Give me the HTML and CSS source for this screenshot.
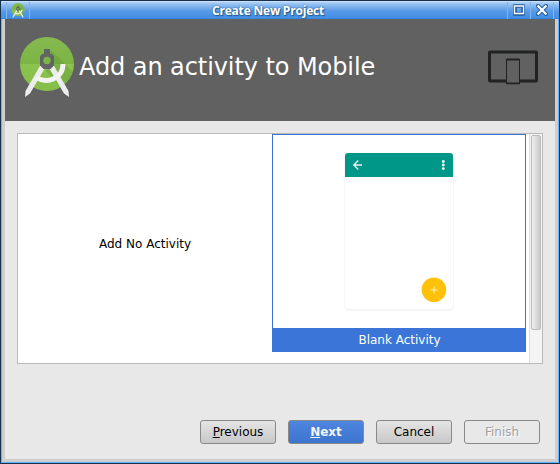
FILE: index.html
```html
<!DOCTYPE html>
<html lang="en">
<head>
<meta charset="utf-8">
<title>Create New Project</title>
<link rel="stylesheet" href="styles.css">
</head>
<body>
<svg width="0" height="0" class="defs">
  <defs>
    <linearGradient id="green" x1="0" y1="0" x2="0" y2="1">
      <stop offset="0" stop-color="#86b950"/><stop offset=".5" stop-color="#7cb544"/>
      <stop offset=".5" stop-color="#8bc34f"/><stop offset="1" stop-color="#85be49"/>
    </linearGradient>
    <clipPath id="disc"><circle cx="27" cy="27" r="27"/></clipPath>
    <symbol id="studio" viewBox="0 0 54 61">
      <circle cx="27" cy="27" r="27" fill="url(#green)"/>
      <g clip-path="url(#disc)">
        <path d="M31 13 54 36V54H44L26 34z" fill="#4f8a2c" opacity=".28"/>
      </g>
      <path d="M20.500 28 5.500 54 5 60 10 56.500 25 31zM33.500 28 48.500 54 49 60 44 56.500 29 31z" fill="#ececec"/>
      <path d="M16.500 40.500C27 47.500 43 41.500 43 27" fill="none" stroke="#f3f3f3" stroke-width="5"/>
      <path d="M24 12h6v4.500l2.500 1 1.500 2v9l-3.500 3.500h-7l-3.500-3.500v-9l1.500-2 2.500-1z" fill="#616463"/>
      <circle cx="27" cy="23.500" r="3.700" fill="#7cb544"/>
    </symbol>
  </defs>
</svg>
<div class="window">
  <div class="titlebar">
    <span class="menu"><svg class="mini" width="14" height="15"><use href="#studio"/></svg></span>
    <span class="caption">Create New Project</span>
    <span class="ctl max"><svg width="12" height="12" viewBox="0 0 12 12"><rect x="2" y="2" width="8" height="8" fill="none" stroke="#245a9d" stroke-width="3.500"/><path d="M1.500 2H10.500V9.500H1.500z" fill="none" stroke="#fff" stroke-width="1.300"/></svg></span>
    <span class="ctl close"><svg width="12" height="12" viewBox="0 0 12 12"><path d="M2 2 10 10M10 2 2 10" stroke="#245a9d" stroke-width="4" stroke-linecap="round"/><path d="M2.300 2.300 9.700 9.700M9.700 2.300 2.300 9.700" stroke="#fff" stroke-width="2.200" stroke-linecap="square"/></svg></span>
  </div>
  <div class="frame">
    <header class="banner">
      <svg class="logo" width="54" height="61"><use href="#studio"/></svg>
      <h1>Add an activity to Mobile</h1>
      <svg class="devices" width="50" height="35" viewBox="0 0 50 35">
        <rect x="1.500" y="2" width="47" height="29" rx=".5" fill="none" stroke="#202322" stroke-width="3"/>
        <rect x="18.500" y="9.500" width="13" height="24" fill="#616161" stroke="#202322"/>
        <path d="M18.500 9.500h13M18.500 33.300h13" stroke="#202322" stroke-width="1.800"/>
      </svg>
    </header>
    <main class="gallery">
      <div class="cell"><span>Add No Activity</span></div>
      <div class="cell selected">
        <div class="preview">
          <svg width="116" height="164" viewBox="0 0 116 164">
            <rect x="3" y="4" width="110" height="157" rx="4" fill="#fafafa"/>
            <rect x="3.500" y="4" width="109" height="156.500" rx="3.500" fill="#f3f3f3"/>
            <rect x="4" y="3" width="108" height="156" rx="3" fill="#fff"/>
            <path d="M4 27V6q0-3 3-3h102q3 0 3 3v21z" fill="#009788"/>
            <path d="M12.500 15H21M17.300 10.500 12.800 15l4.500 4.500" fill="none" stroke="#e3f4f2" stroke-width="1.400"/>
            <g fill="#f0faf9"><circle cx="102.300" cy="11.500" r="1.400"/><circle cx="102.300" cy="15" r="1.400"/><circle cx="102.300" cy="18.600" r="1.400"/></g>
            <circle cx="92.900" cy="139.800" r="12.300" fill="#ffc10a"/>
            <path d="M89.500 140h7M93 136.500v7" stroke="#fff0b8" stroke-width="1.100"/>
          </svg>
        </div>
        <div class="name">Blank Activity</div>
      </div>
      <div class="scroll"><div class="thumb"></div></div>
    </main>
    <footer class="actions">
      <button><span><u>P</u>revious</span></button>
      <button class="primary"><span><u>N</u>ext</span></button>
      <button><span>Cancel</span></button>
      <button class="off"><span>Finish</span></button>
    </footer>
  </div>
</div>
</body>
</html>
```
FILE: styles.css
```css
* { box-sizing: border-box; }
body {
  margin: 0;
  background: #17334f;
  font: 12px "DejaVu Sans", sans-serif;
  color: #000;
}
.defs { position: absolute; }
.window {
  display: flex;
  flex-direction: column;
  width: 560px;
  height: 464px;
  border: 1px solid #17314f;
  border-radius: 2px 2px 0 0;
  background: #63aef8;
  padding: 0 1px 1px;
  overflow: hidden;
}
.titlebar {
  display: flex;
  align-items: center;
  height: 18px;
  margin: 0 -1px;
  flex: none;
  background: linear-gradient(#d5e6fa 0, #a3c9f4 2px, #7db1ed 6px, #5799e6 10px, #4290e7 17px, #2f7fd2 18px);
}
.menu {
  width: 24px;
  height: 17px;
  margin-left: 5px;
  border: solid #82b5ee;
  border-width: 0 1px;
  display: flex;
  justify-content: center;
  align-items: center;
}
.caption {
  flex: 1;
  padding: 2px 1px 0 0;
  text-align: center;
  font: bold 12px/18px "Open Sans", "Noto Sans", sans-serif;
  letter-spacing: -.2px;
  color: #fff;
  text-shadow: 1px 1px 1px #24588f, 0 0 2px #24588f;
}
.ctl {
  width: 23px;
  height: 17px;
  display: flex;
  align-items: center;
  justify-content: center;
  border-left: 1px solid #82b5ee;
}
.close { width: 24px; margin-right: 5px; border-right: 1px solid #82b5ee; }
.frame {
  flex: 1;
  display: flex;
  flex-direction: column;
  border: solid #cecece;
  border-width: 0 3px 3px;
  background: #e8e8e8;
}
.banner {
  display: flex;
  align-items: center;
  height: 102px;
  padding: 0 17px 0 15px;
  background: #616161;
}
.logo { margin-top: -5px; }
h1 {
  flex: 1;
  margin: -6px 0 0 5px;
  font: 24px/30px "DejaVu Sans", sans-serif;
  letter-spacing: -.08px;
  color: #fff;
  white-space: nowrap;
}
.devices { margin-top: -5px; }
.gallery {
  display: flex;
  height: 231px;
  margin: 12px 12px 0;
  border: 1px solid #bababa;
  background: #fff;
}
.cell {
  display: flex;
  align-items: center;
  justify-content: center;
  width: 254px;
  height: 218px;
  padding-top: 2px;
}
.selected {
  flex-direction: column;
  justify-content: flex-start;
  padding-top: 0;
  border: 1px solid #3a75d7;
}
.preview { flex: 1; padding-top: 15px; }
.preview svg { display: block; }
.name {
  width: 100%;
  height: 23px;
  padding-left: 1px;
  line-height: 24px;
  background: #3a75d7;
  color: #fff;
  text-align: center;
}
.scroll {
  width: 13px;
  margin-left: auto;
  padding: 1px 1px 0;
  border-left: 1px solid #dedede;
  background: #f4f4f4;
}
.thumb {
  height: 195px;
  border: 1px solid #bcbcbc;
  border-radius: 2px;
  background: linear-gradient(90deg, #eee, #cacaca);
}
.actions {
  display: flex;
  justify-content: flex-end;
  gap: 12px;
  margin: 56px 15px 0;
}
button {
  width: 76px;
  height: 24px;
  padding: 0;
  border: 1px solid #898989;
  border-radius: 3px;
  background: linear-gradient(#e4e4e4, #c8c8c8);
  font: 12px "DejaVu Sans", sans-serif;
  color: #000;
}
.primary {
  background: linear-gradient(#4e86df, #3c74ce);
  color: #f4f4f4;
  font-weight: bold;
}
.off {
  background: #e8e8e8;
  color: #a0a0a0;
  text-shadow: 1px 1px #fff;
}
```
